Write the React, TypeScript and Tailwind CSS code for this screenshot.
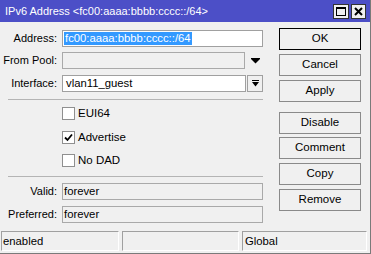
import React from 'react';

const font = { fontFamily: '"Liberation Sans", Arial, sans-serif' };

const Btn: React.FC<{ label: string; def?: boolean; className?: string }> = ({ label, def, className = '' }) => (
  <div
    className={`h-[22px] w-[82px] flex items-center justify-center text-[11.5px] text-black bg-[#f0f0f0] border ${
      def ? 'border-black' : 'border-[#8a8a8a]'
    } ${className}`}
  >
    {label}
  </div>
);

const Check: React.FC<{ label: string; checked?: boolean; className?: string }> = ({ label, checked, className = '' }) => (
  <div className={`flex items-center h-[13px] ${className}`}>
    <div className="w-[13px] h-[13px] bg-white border border-[#8f8f8f] flex items-center justify-center">
      {checked && (
        <svg width="9" height="9" viewBox="0 0 9 9">
          <path d="M1 4.5 L3.5 7 L8 1.5" stroke="#000" strokeWidth="1.8" fill="none" />
        </svg>
      )}
    </div>
    <span className="ml-[3px] text-[11.5px] text-black">{label}</span>
  </div>
);

const Row: React.FC<{ label: string; className?: string; children: React.ReactNode }> = ({ label, className = '', children }) => (
  <div className={`flex items-center h-[17px] ${className}`}>
    <div className="w-[58px] text-right text-[11px] text-black pr-[1px]">{label}</div>
    <div className="ml-[4px] flex items-center">{children}</div>
  </div>
);

export default function App() {
  return (
    <div className="w-[371px] h-[254px] bg-[#f0f0f0] flex flex-col border-r border-b border-[#7a7a7a] overflow-hidden" style={font}>
      <div className="h-[22px] bg-[#4c4fc7] flex items-center pl-[5px] pr-[4px] shrink-0">
        <span className="text-white text-[11px] flex-1">IPv6 Address &lt;fc00:aaaa:bbbb:cccc::/64&gt;</span>
        <div className="w-[16px] h-[15px] bg-[#f0f0f0] border border-[#333] flex items-center justify-center">
          <div className="w-[10px] h-[9px] border border-black border-t-2" />
        </div>
        <div className="w-[15px] h-[15px] ml-[2px] bg-[#f0f0f0] border border-[#333] flex items-center justify-center">
          <svg width="9" height="9" viewBox="0 0 9 9">
            <path d="M1 1 L8 8 M8 1 L1 8" stroke="#000" strokeWidth="2" />
          </svg>
        </div>
      </div>

      <div className="flex flex-1">
        <div className="w-[263px] flex flex-col">
          <Row label="Address:" className="mt-[8px]">
            <div className="w-[201px] h-[17px] bg-white border border-[#a0a0a0] flex items-center px-[1px]">
              <span className="bg-[#3399ff] text-white text-[11.3px] leading-[13px] px-[1px]">fc00:aaaa:bbbb:cccc::/64</span>
            </div>
          </Row>
          <Row label="From Pool:" className="mt-[5px]">
            <div className="w-[183px] h-[17px] bg-[#f0f0f0] border border-[#a9a9a9]" />
            <svg className="ml-[6px]" width="9" height="6" viewBox="0 0 9 6">
              <path d="M0 0 H9 V1 L4.5 5.5 L0 1 Z" fill="#000" />
            </svg>
          </Row>
          <Row label="Interface:" className="mt-[6px]">
            <div className="w-[184px] h-[17px] bg-white border border-[#a0a0a0] flex items-center px-[3px] text-[11.3px] text-black">
              vlan11_guest
            </div>
            <div className="w-[16px] h-[17px] ml-[1px] bg-[#f0f0f0] border border-[#a0a0a0] flex items-center justify-center">
              <svg width="7" height="7" viewBox="0 0 7 7">
                <path d="M0 0 H7 V1 H0 Z M0 2 H7 L3.5 6.5 Z" fill="#000" />
              </svg>
            </div>
          </Row>
          <div className="ml-[8px] mt-[7px] h-[1px] bg-[#b4b4b4]" />
          <div className="ml-[62px] flex flex-col">
            <Check label="EUI64" className="mt-[7px]" />
            <Check label="Advertise" checked className="mt-[11px]" />
            <Check label="No DAD" className="mt-[10px]" />
          </div>
          <div className="ml-[8px] mt-[9px] h-[1px] bg-[#b4b4b4]" />
          <Row label="Valid:" className="mt-[6px]">
            <div className="w-[201px] h-[17px] bg-[#f0f0f0] border border-[#a9a9a9] flex items-center px-[1px] text-[11.3px] text-black">
              forever
            </div>
          </Row>
          <Row label="Preferred:" className="mt-[6px]">
            <div className="w-[201px] h-[17px] bg-[#f0f0f0] border border-[#a9a9a9] flex items-center px-[1px] text-[11.3px] text-black">
              forever
            </div>
          </Row>
        </div>

        <div className="ml-[16px] flex flex-col pt-[6px]">
          <Btn label="OK" def />
          <Btn label="Cancel" className="mt-[4px]" />
          <Btn label="Apply" className="mt-[4px]" />
          <Btn label="Disable" className="mt-[10px]" />
          <Btn label="Comment" className="mt-[3px]" />
          <Btn label="Copy" className="mt-[4px]" />
          <Btn label="Remove" className="mt-[4px]" />
        </div>
      </div>

      <div className="h-[20px] mb-[2px] flex gap-[3px] pl-[1px] pr-[3px] shrink-0 text-[11.3px] text-black">
        <div className="w-[118px] border border-[#a0a0a0] border-r-white border-b-white flex items-center px-[1px]">enabled</div>
        <div className="w-[117px] border border-[#a0a0a0] border-r-white border-b-white" />
        <div className="flex-1 border border-[#a0a0a0] border-r-white border-b-white flex items-center px-[2px]">Global</div>
      </div>
    </div>
  );
}
